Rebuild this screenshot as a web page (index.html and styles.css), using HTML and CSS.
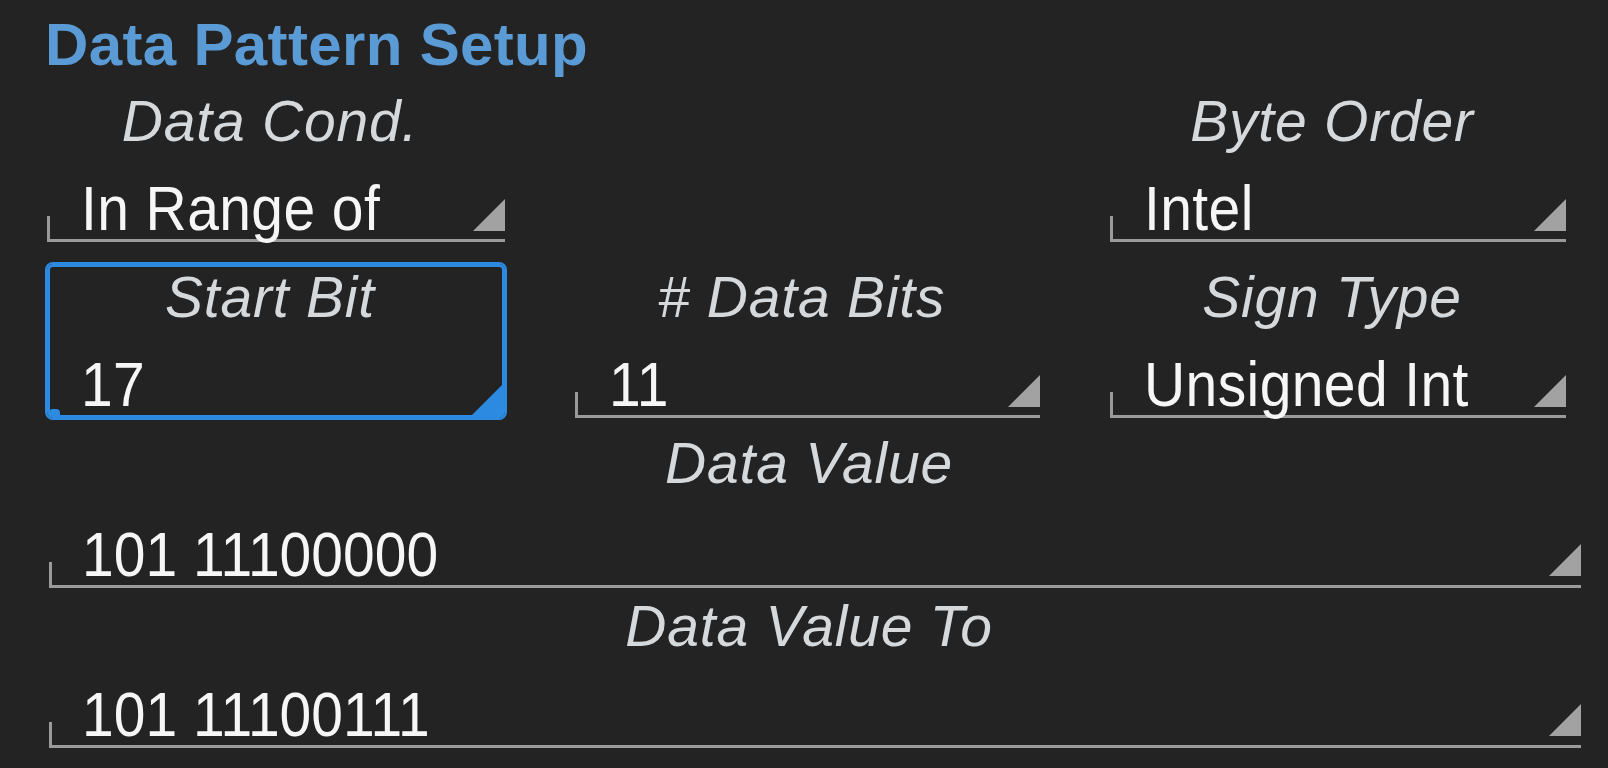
FILE: index.html
```html
<!DOCTYPE html>
<html>
<head>
<meta charset="utf-8">
<link rel="stylesheet" href="styles.css">
</head>
<body>
<div class="panel">
  <h1 class="title">Data Pattern Setup</h1>
  <div class="grid">
    <div class="field">
      <div class="label">Data Cond.</div>
      <div class="value-row"><span class="value">In Range of</span><span class="tri"></span></div>
    </div>
    <div class="spacer"></div>
    <div class="field">
      <div class="label">Byte Order</div>
      <div class="value-row"><span class="value">Intel</span><span class="tri"></span></div>
    </div>
    <div class="field focused">
      <div class="label">Start Bit</div>
      <div class="value-row"><span class="value">17</span><span class="tri"></span></div>
    </div>
    <div class="field">
      <div class="label"># Data Bits</div>
      <div class="value-row"><span class="value">11</span><span class="tri"></span></div>
    </div>
    <div class="field">
      <div class="label">Sign Type</div>
      <div class="value-row"><span class="value">Unsigned Int</span><span class="tri"></span></div>
    </div>
  </div>
  <div class="field wide first">
    <div class="label">Data Value</div>
    <div class="value-row"><span class="value">101 11100000</span><span class="tri"></span></div>
  </div>
  <div class="field wide second">
    <div class="label">Data Value To</div>
    <div class="value-row"><span class="value">101 11100111</span><span class="tri"></span></div>
  </div>
</div>
</body>
</html>
```
FILE: styles.css
```css
html, body {
  margin: 0;
  padding: 0;
  background: #232323;
}

body {
  font-family: "Liberation Sans", Arial, sans-serif;
  width: 1608px;
  height: 768px;
  overflow: hidden;
}

.panel {
  padding: 15px 0 0 47px;
}

.title {
  margin: 0 0 13px -2px;
  font-size: 60px;
  line-height: 60px;
  font-weight: 700;
  letter-spacing: 0.35px;
  color: #5b9bd5;
}

.grid {
  display: grid;
  grid-template-columns: 458px 465px 456px;
  column-gap: 70px;
  row-gap: 22px;
}

.field {
  position: relative;
}

.label {
  box-sizing: border-box;
  padding-right: 12px;
  font-size: 57px;
  line-height: 66px;
  font-style: italic;
  letter-spacing: 0.8px;
  text-align: center;
  color: #d6d9dc;
  white-space: nowrap;
}

.value-row {
  position: relative;
  box-sizing: border-box;
  height: 88px;
  border-bottom: 3px solid #9a9a9a;
  display: flex;
  align-items: flex-end;
  justify-content: space-between;
  padding-left: 34px;
}

.value-row::before {
  content: "";
  position: absolute;
  left: 0;
  bottom: -3px;
  width: 3px;
  height: 26px;
  background: #9a9a9a;
}

.value {
  display: inline-block;
  font-size: 57px;
  line-height: 57px;
  letter-spacing: 0.4px;
  color: #f6f6f6;
  white-space: nowrap;
  transform: scaleY(1.12);
  transform-origin: 0 85%;
}

.tri {
  width: 32px;
  height: 32px;
  margin-bottom: 8px;
  background: #a2a2a2;
  clip-path: polygon(100% 0, 100% 100%, 0 100%);
}

.focused {
  border-radius: 6px;
  box-shadow: 0 0 0 2px #2c8be0, inset 0 0 0 3px #2c8be0;
}

.focused .value-row {
  border-bottom-color: transparent;
}

.focused .value-row::before {
  left: 3px;
  bottom: 0;
  width: 10px;
  height: 6px;
  background: #2c8be0;
  border-radius: 2px 4px 0 0;
}

.focused .tri {
  width: 30px;
  height: 30px;
  margin-right: 3px;
  margin-bottom: 0;
  background: #2c8be0;
}

.wide {
  width: 1532px;
  margin-left: 2px;
}

.wide.first {
  margin-top: 12px;
}

.wide .value-row {
  height: 92px;
  padding-left: 33px;
}

.wide .value {
  letter-spacing: 0;
}

.wide.second {
  margin-top: 5px;
}

.wide.second .value-row {
  height: 89px;
}

.wide .tri {
  margin-bottom: 9px;
}
```
